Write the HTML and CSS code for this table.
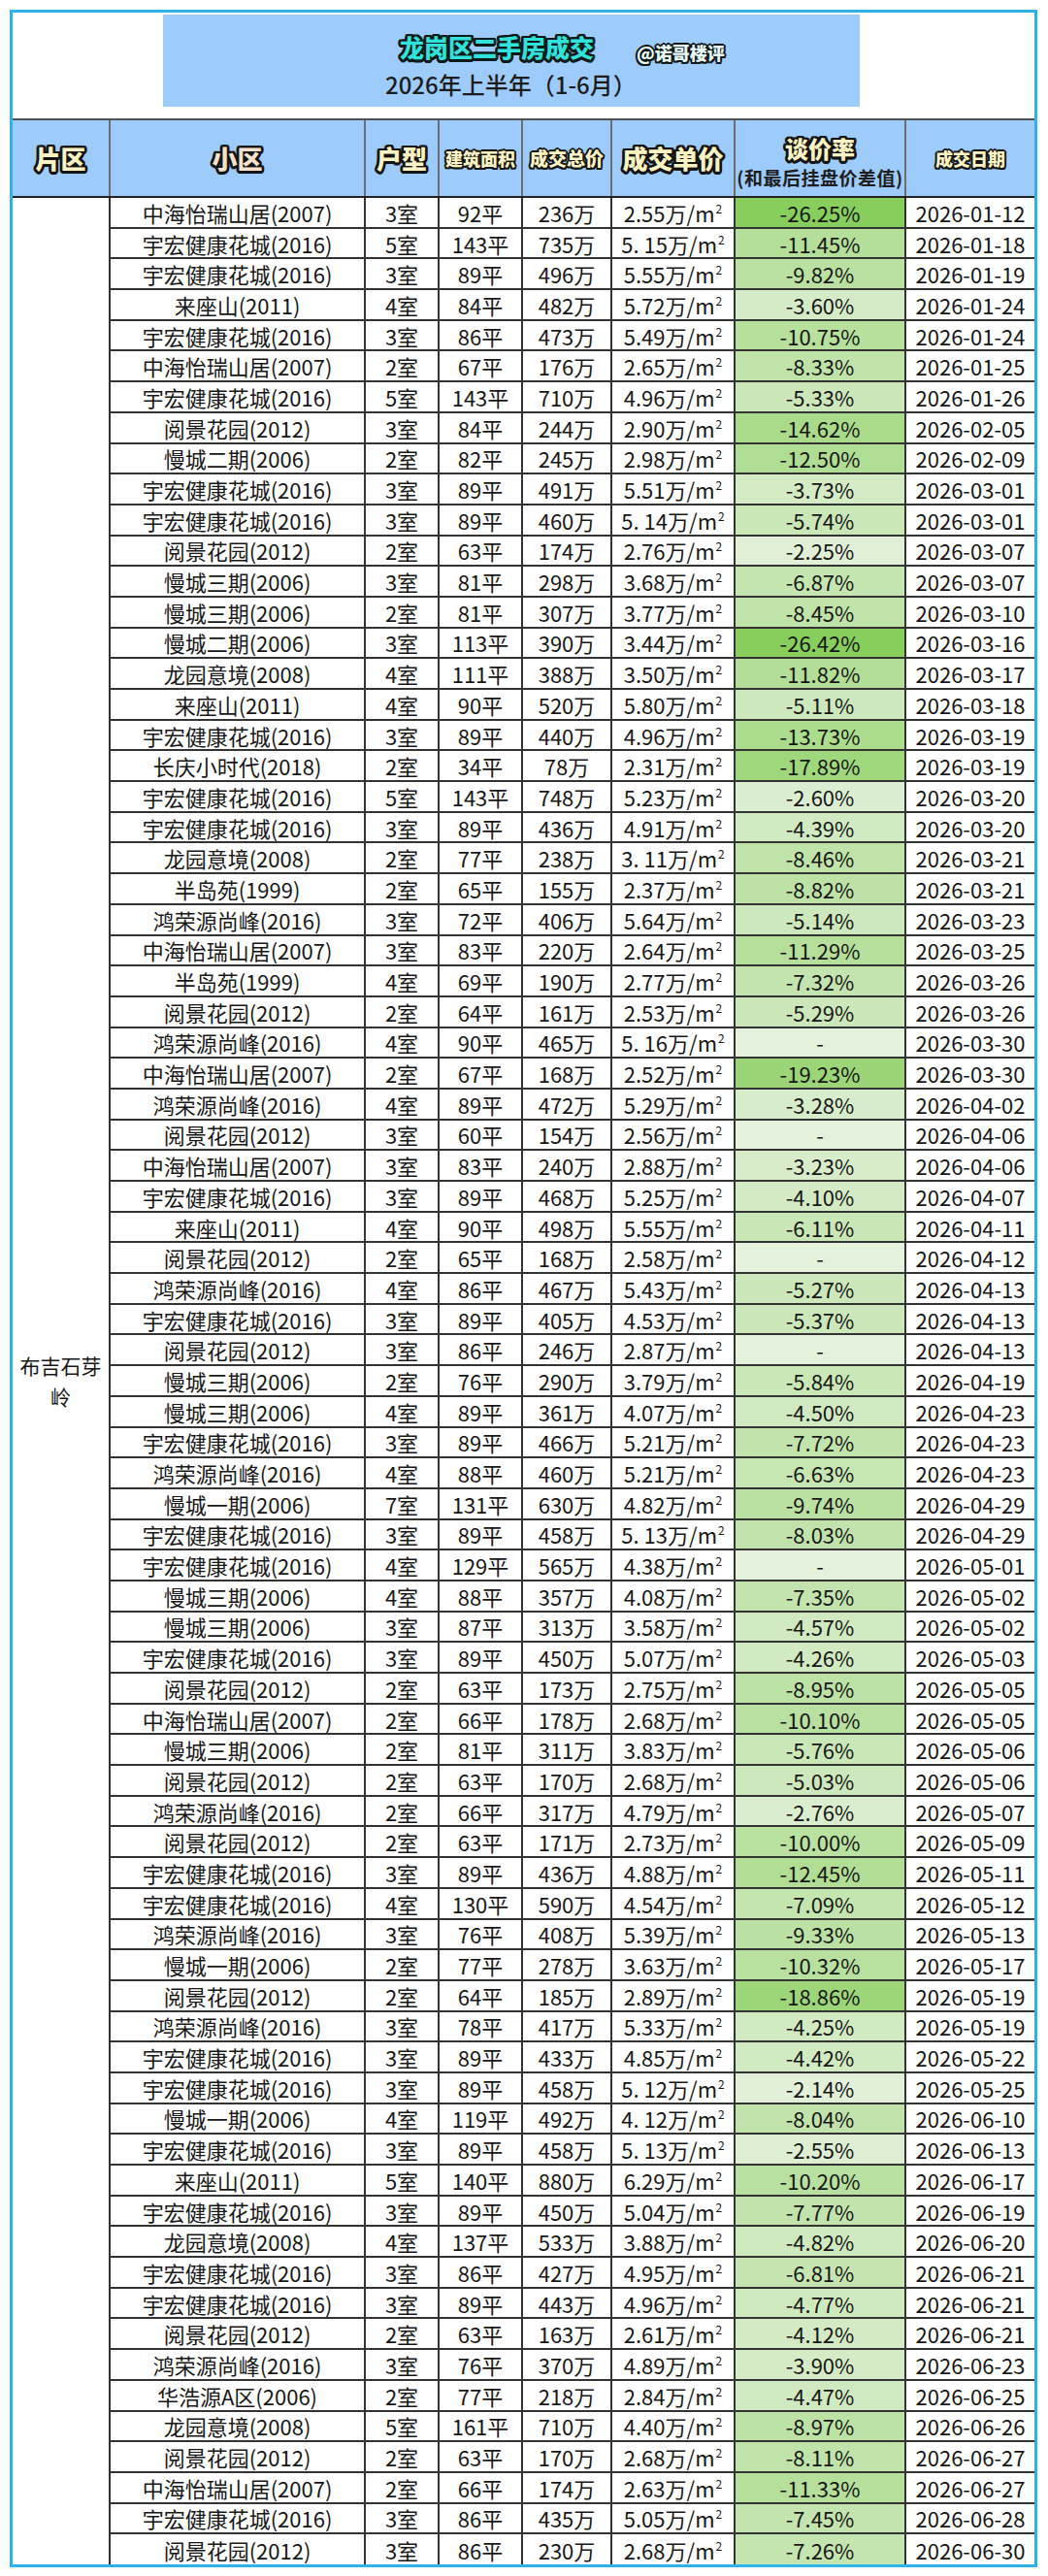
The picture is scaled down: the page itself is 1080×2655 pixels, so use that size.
FILE: index.html
```html
<!DOCTYPE html>
<html lang="zh-CN">
<head>
<meta charset="utf-8">
<title>龙岗区二手房成交 2026年上半年</title>
<link rel="stylesheet" href="styles.css">
</head>
<body>
<div class="frame">
  <div class="title-area">
    <div class="title-box">
      <div class="title-line"><span class="title">龙岗区二手房成交</span><span class="tag">@诺哥楼评</span></div>
      <div class="subtitle">2026年上半年（1-6月）</div>
    </div>
  </div>
  <table class="deals">
    <colgroup>
      <col class="c-area"><col class="c-name"><col class="c-room"><col class="c-size"><col class="c-total"><col class="c-unit"><col class="c-rate"><col class="c-date">
    </colgroup>
    <thead>
      <tr>
        <th><span class="hd hd-lg">片区</span></th>
        <th><span class="hd hd-lg pink">小区</span></th>
        <th><span class="hd hd-lg">户型</span></th>
        <th><span class="hd hd-sm">建筑面积</span></th>
        <th><span class="hd hd-md">成交总价</span></th>
        <th><span class="hd hd-lg">成交单价</span></th>
        <th class="th-rate"><span class="hd hd-rate">谈价率</span><span class="hd-note">(和最后挂盘价差值)</span></th>
        <th><span class="hd hd-sm">成交日期</span></th>
      </tr>
    </thead>
    <tbody>
      <tr><td class="area" rowspan="77">布吉石芽岭</td><td>中海怡瑞山居(2007)</td><td>3室</td><td>92平</td><td>236万</td><td>2.55万/m<sup>2</sup></td><td class="rate" style="background:#88ce5d">-26.25%</td><td>2026-01-12</td></tr>
      <tr><td>宇宏健康花城(2016)</td><td>5室</td><td>143平</td><td>735万</td><td>5. 15万/m<sup>2</sup></td><td class="rate" style="background:#b4df99">-11.45%</td><td>2026-01-18</td></tr>
      <tr><td>宇宏健康花城(2016)</td><td>3室</td><td>89平</td><td>496万</td><td>5.55万/m<sup>2</sup></td><td class="rate" style="background:#bae1a1">-9.82%</td><td>2026-01-19</td></tr>
      <tr><td>来座山(2011)</td><td>4室</td><td>84平</td><td>482万</td><td>5.72万/m<sup>2</sup></td><td class="rate" style="background:#d5ebc8">-3.60%</td><td>2026-01-24</td></tr>
      <tr><td>宇宏健康花城(2016)</td><td>3室</td><td>86平</td><td>473万</td><td>5.49万/m<sup>2</sup></td><td class="rate" style="background:#b6e09c">-10.75%</td><td>2026-01-24</td></tr>
      <tr><td>中海怡瑞山居(2007)</td><td>2室</td><td>67平</td><td>176万</td><td>2.65万/m<sup>2</sup></td><td class="rate" style="background:#bfe3a9">-8.33%</td><td>2026-01-25</td></tr>
      <tr><td>宇宏健康花城(2016)</td><td>5室</td><td>143平</td><td>710万</td><td>4.96万/m<sup>2</sup></td><td class="rate" style="background:#cce8bb">-5.33%</td><td>2026-01-26</td></tr>
      <tr><td>阅景花园(2012)</td><td>3室</td><td>84平</td><td>244万</td><td>2.90万/m<sup>2</sup></td><td class="rate" style="background:#aadb8b">-14.62%</td><td>2026-02-05</td></tr>
      <tr><td>慢城二期(2006)</td><td>2室</td><td>82平</td><td>245万</td><td>2.98万/m<sup>2</sup></td><td class="rate" style="background:#b0dd94">-12.50%</td><td>2026-02-09</td></tr>
      <tr><td>宇宏健康花城(2016)</td><td>3室</td><td>89平</td><td>491万</td><td>5.51万/m<sup>2</sup></td><td class="rate" style="background:#d5ebc6">-3.73%</td><td>2026-03-01</td></tr>
      <tr><td>宇宏健康花城(2016)</td><td>3室</td><td>89平</td><td>460万</td><td>5. 14万/m<sup>2</sup></td><td class="rate" style="background:#cae7b8">-5.74%</td><td>2026-03-01</td></tr>
      <tr><td>阅景花园(2012)</td><td>2室</td><td>63平</td><td>174万</td><td>2.76万/m<sup>2</sup></td><td class="rate" style="background:#e0efd6">-2.25%</td><td>2026-03-07</td></tr>
      <tr><td>慢城三期(2006)</td><td>3室</td><td>81平</td><td>298万</td><td>3.68万/m<sup>2</sup></td><td class="rate" style="background:#c5e5b1">-6.87%</td><td>2026-03-07</td></tr>
      <tr><td>慢城三期(2006)</td><td>2室</td><td>81平</td><td>307万</td><td>3.77万/m<sup>2</sup></td><td class="rate" style="background:#bfe3a8">-8.45%</td><td>2026-03-10</td></tr>
      <tr><td>慢城二期(2006)</td><td>3室</td><td>113平</td><td>390万</td><td>3.44万/m<sup>2</sup></td><td class="rate" style="background:#88ce5c">-26.42%</td><td>2026-03-16</td></tr>
      <tr><td>龙园意境(2008)</td><td>4室</td><td>111平</td><td>388万</td><td>3.50万/m<sup>2</sup></td><td class="rate" style="background:#b3de97">-11.82%</td><td>2026-03-17</td></tr>
      <tr><td>来座山(2011)</td><td>4室</td><td>90平</td><td>520万</td><td>5.80万/m<sup>2</sup></td><td class="rate" style="background:#cde8bc">-5.11%</td><td>2026-03-18</td></tr>
      <tr><td>宇宏健康花城(2016)</td><td>3室</td><td>89平</td><td>440万</td><td>4.96万/m<sup>2</sup></td><td class="rate" style="background:#acdc8e">-13.73%</td><td>2026-03-19</td></tr>
      <tr><td>长庆小时代(2018)</td><td>2室</td><td>34平</td><td>78万</td><td>2.31万/m<sup>2</sup></td><td class="rate" style="background:#9fd77d">-17.89%</td><td>2026-03-19</td></tr>
      <tr><td>宇宏健康花城(2016)</td><td>5室</td><td>143平</td><td>748万</td><td>5.23万/m<sup>2</sup></td><td class="rate" style="background:#dceed1">-2.60%</td><td>2026-03-20</td></tr>
      <tr><td>宇宏健康花城(2016)</td><td>3室</td><td>89平</td><td>436万</td><td>4.91万/m<sup>2</sup></td><td class="rate" style="background:#d1eac1">-4.39%</td><td>2026-03-20</td></tr>
      <tr><td>龙园意境(2008)</td><td>2室</td><td>77平</td><td>238万</td><td>3. 11万/m<sup>2</sup></td><td class="rate" style="background:#bfe3a8">-8.46%</td><td>2026-03-21</td></tr>
      <tr><td>半岛苑(1999)</td><td>2室</td><td>65平</td><td>155万</td><td>2.37万/m<sup>2</sup></td><td class="rate" style="background:#bee2a6">-8.82%</td><td>2026-03-21</td></tr>
      <tr><td>鸿荣源尚峰(2016)</td><td>3室</td><td>72平</td><td>406万</td><td>5.64万/m<sup>2</sup></td><td class="rate" style="background:#cde8bc">-5.14%</td><td>2026-03-23</td></tr>
      <tr><td>中海怡瑞山居(2007)</td><td>3室</td><td>83平</td><td>220万</td><td>2.64万/m<sup>2</sup></td><td class="rate" style="background:#b5df9a">-11.29%</td><td>2026-03-25</td></tr>
      <tr><td>半岛苑(1999)</td><td>4室</td><td>69平</td><td>190万</td><td>2.77万/m<sup>2</sup></td><td class="rate" style="background:#c3e4af">-7.32%</td><td>2026-03-26</td></tr>
      <tr><td>阅景花园(2012)</td><td>2室</td><td>64平</td><td>161万</td><td>2.53万/m<sup>2</sup></td><td class="rate" style="background:#cce8bb">-5.29%</td><td>2026-03-26</td></tr>
      <tr><td>鸿荣源尚峰(2016)</td><td>4室</td><td>90平</td><td>465万</td><td>5. 16万/m<sup>2</sup></td><td class="rate nil">-</td><td>2026-03-30</td></tr>
      <tr><td>中海怡瑞山居(2007)</td><td>2室</td><td>67平</td><td>168万</td><td>2.52万/m<sup>2</sup></td><td class="rate" style="background:#9cd577">-19.23%</td><td>2026-03-30</td></tr>
      <tr><td>鸿荣源尚峰(2016)</td><td>4室</td><td>89平</td><td>472万</td><td>5.29万/m<sup>2</sup></td><td class="rate" style="background:#d7ecca">-3.28%</td><td>2026-04-02</td></tr>
      <tr><td>阅景花园(2012)</td><td>3室</td><td>60平</td><td>154万</td><td>2.56万/m<sup>2</sup></td><td class="rate nil">-</td><td>2026-04-06</td></tr>
      <tr><td>中海怡瑞山居(2007)</td><td>3室</td><td>83平</td><td>240万</td><td>2.88万/m<sup>2</sup></td><td class="rate" style="background:#d8ecca">-3.23%</td><td>2026-04-06</td></tr>
      <tr><td>宇宏健康花城(2016)</td><td>3室</td><td>89平</td><td>468万</td><td>5.25万/m<sup>2</sup></td><td class="rate" style="background:#d3eac4">-4.10%</td><td>2026-04-07</td></tr>
      <tr><td>来座山(2011)</td><td>4室</td><td>90平</td><td>498万</td><td>5.55万/m<sup>2</sup></td><td class="rate" style="background:#c9e6b6">-6.11%</td><td>2026-04-11</td></tr>
      <tr><td>阅景花园(2012)</td><td>2室</td><td>65平</td><td>168万</td><td>2.58万/m<sup>2</sup></td><td class="rate nil">-</td><td>2026-04-12</td></tr>
      <tr><td>鸿荣源尚峰(2016)</td><td>4室</td><td>86平</td><td>467万</td><td>5.43万/m<sup>2</sup></td><td class="rate" style="background:#cce8bb">-5.27%</td><td>2026-04-13</td></tr>
      <tr><td>宇宏健康花城(2016)</td><td>3室</td><td>89平</td><td>405万</td><td>4.53万/m<sup>2</sup></td><td class="rate" style="background:#cce8bb">-5.37%</td><td>2026-04-13</td></tr>
      <tr><td>阅景花园(2012)</td><td>3室</td><td>86平</td><td>246万</td><td>2.87万/m<sup>2</sup></td><td class="rate nil">-</td><td>2026-04-13</td></tr>
      <tr><td>慢城三期(2006)</td><td>2室</td><td>76平</td><td>290万</td><td>3.79万/m<sup>2</sup></td><td class="rate" style="background:#cae7b7">-5.84%</td><td>2026-04-19</td></tr>
      <tr><td>慢城三期(2006)</td><td>4室</td><td>89平</td><td>361万</td><td>4.07万/m<sup>2</sup></td><td class="rate" style="background:#d0e9c1">-4.50%</td><td>2026-04-23</td></tr>
      <tr><td>宇宏健康花城(2016)</td><td>3室</td><td>89平</td><td>466万</td><td>5.21万/m<sup>2</sup></td><td class="rate" style="background:#c2e4ac">-7.72%</td><td>2026-04-23</td></tr>
      <tr><td>鸿荣源尚峰(2016)</td><td>4室</td><td>88平</td><td>460万</td><td>5.21万/m<sup>2</sup></td><td class="rate" style="background:#c6e6b3">-6.63%</td><td>2026-04-23</td></tr>
      <tr><td>慢城一期(2006)</td><td>7室</td><td>131平</td><td>630万</td><td>4.82万/m<sup>2</sup></td><td class="rate" style="background:#bae1a2">-9.74%</td><td>2026-04-29</td></tr>
      <tr><td>宇宏健康花城(2016)</td><td>3室</td><td>89平</td><td>458万</td><td>5. 13万/m<sup>2</sup></td><td class="rate" style="background:#c1e3ab">-8.03%</td><td>2026-04-29</td></tr>
      <tr><td>宇宏健康花城(2016)</td><td>4室</td><td>129平</td><td>565万</td><td>4.38万/m<sup>2</sup></td><td class="rate nil">-</td><td>2026-05-01</td></tr>
      <tr><td>慢城三期(2006)</td><td>4室</td><td>88平</td><td>357万</td><td>4.08万/m<sup>2</sup></td><td class="rate" style="background:#c3e4af">-7.35%</td><td>2026-05-02</td></tr>
      <tr><td>慢城三期(2006)</td><td>3室</td><td>87平</td><td>313万</td><td>3.58万/m<sup>2</sup></td><td class="rate" style="background:#d0e9c0">-4.57%</td><td>2026-05-02</td></tr>
      <tr><td>宇宏健康花城(2016)</td><td>3室</td><td>89平</td><td>450万</td><td>5.07万/m<sup>2</sup></td><td class="rate" style="background:#d2eac2">-4.26%</td><td>2026-05-03</td></tr>
      <tr><td>阅景花园(2012)</td><td>2室</td><td>63平</td><td>173万</td><td>2.75万/m<sup>2</sup></td><td class="rate" style="background:#bde2a6">-8.95%</td><td>2026-05-05</td></tr>
      <tr><td>中海怡瑞山居(2007)</td><td>2室</td><td>66平</td><td>178万</td><td>2.68万/m<sup>2</sup></td><td class="rate" style="background:#b9e0a0">-10.10%</td><td>2026-05-05</td></tr>
      <tr><td>慢城三期(2006)</td><td>2室</td><td>81平</td><td>311万</td><td>3.83万/m<sup>2</sup></td><td class="rate" style="background:#cae7b8">-5.76%</td><td>2026-05-06</td></tr>
      <tr><td>阅景花园(2012)</td><td>2室</td><td>63平</td><td>170万</td><td>2.68万/m<sup>2</sup></td><td class="rate" style="background:#cee8bd">-5.03%</td><td>2026-05-06</td></tr>
      <tr><td>鸿荣源尚峰(2016)</td><td>2室</td><td>66平</td><td>317万</td><td>4.79万/m<sup>2</sup></td><td class="rate" style="background:#dbedcf">-2.76%</td><td>2026-05-07</td></tr>
      <tr><td>阅景花园(2012)</td><td>2室</td><td>63平</td><td>171万</td><td>2.73万/m<sup>2</sup></td><td class="rate" style="background:#b9e1a0">-10.00%</td><td>2026-05-09</td></tr>
      <tr><td>宇宏健康花城(2016)</td><td>3室</td><td>89平</td><td>436万</td><td>4.88万/m<sup>2</sup></td><td class="rate" style="background:#b1dd94">-12.45%</td><td>2026-05-11</td></tr>
      <tr><td>宇宏健康花城(2016)</td><td>4室</td><td>130平</td><td>590万</td><td>4.54万/m<sup>2</sup></td><td class="rate" style="background:#c4e5b0">-7.09%</td><td>2026-05-12</td></tr>
      <tr><td>鸿荣源尚峰(2016)</td><td>3室</td><td>76平</td><td>408万</td><td>5.39万/m<sup>2</sup></td><td class="rate" style="background:#bce1a4">-9.33%</td><td>2026-05-13</td></tr>
      <tr><td>慢城一期(2006)</td><td>2室</td><td>77平</td><td>278万</td><td>3.63万/m<sup>2</sup></td><td class="rate" style="background:#b8e09f">-10.32%</td><td>2026-05-17</td></tr>
      <tr><td>阅景花园(2012)</td><td>2室</td><td>64平</td><td>185万</td><td>2.89万/m<sup>2</sup></td><td class="rate" style="background:#9dd679">-18.86%</td><td>2026-05-19</td></tr>
      <tr><td>鸿荣源尚峰(2016)</td><td>3室</td><td>78平</td><td>417万</td><td>5.33万/m<sup>2</sup></td><td class="rate" style="background:#d2eac2">-4.25%</td><td>2026-05-19</td></tr>
      <tr><td>宇宏健康花城(2016)</td><td>3室</td><td>89平</td><td>433万</td><td>4.85万/m<sup>2</sup></td><td class="rate" style="background:#d1eac1">-4.42%</td><td>2026-05-22</td></tr>
      <tr><td>宇宏健康花城(2016)</td><td>3室</td><td>89平</td><td>458万</td><td>5. 12万/m<sup>2</sup></td><td class="rate" style="background:#e2f0d9">-2.14%</td><td>2026-05-25</td></tr>
      <tr><td>慢城一期(2006)</td><td>4室</td><td>119平</td><td>492万</td><td>4. 12万/m<sup>2</sup></td><td class="rate" style="background:#c1e3ab">-8.04%</td><td>2026-06-10</td></tr>
      <tr><td>宇宏健康花城(2016)</td><td>3室</td><td>89平</td><td>458万</td><td>5. 13万/m<sup>2</sup></td><td class="rate" style="background:#ddeed2">-2.55%</td><td>2026-06-13</td></tr>
      <tr><td>来座山(2011)</td><td>5室</td><td>140平</td><td>880万</td><td>6.29万/m<sup>2</sup></td><td class="rate" style="background:#b8e0a0">-10.20%</td><td>2026-06-17</td></tr>
      <tr><td>宇宏健康花城(2016)</td><td>3室</td><td>89平</td><td>450万</td><td>5.04万/m<sup>2</sup></td><td class="rate" style="background:#c2e4ac">-7.77%</td><td>2026-06-19</td></tr>
      <tr><td>龙园意境(2008)</td><td>4室</td><td>137平</td><td>533万</td><td>3.88万/m<sup>2</sup></td><td class="rate" style="background:#cfe9be">-4.82%</td><td>2026-06-20</td></tr>
      <tr><td>宇宏健康花城(2016)</td><td>3室</td><td>86平</td><td>427万</td><td>4.95万/m<sup>2</sup></td><td class="rate" style="background:#c6e5b2">-6.81%</td><td>2026-06-21</td></tr>
      <tr><td>宇宏健康花城(2016)</td><td>3室</td><td>89平</td><td>443万</td><td>4.96万/m<sup>2</sup></td><td class="rate" style="background:#cfe9be">-4.77%</td><td>2026-06-21</td></tr>
      <tr><td>阅景花园(2012)</td><td>2室</td><td>63平</td><td>163万</td><td>2.61万/m<sup>2</sup></td><td class="rate" style="background:#d3eac4">-4.12%</td><td>2026-06-21</td></tr>
      <tr><td>鸿荣源尚峰(2016)</td><td>3室</td><td>76平</td><td>370万</td><td>4.89万/m<sup>2</sup></td><td class="rate" style="background:#d4ebc5">-3.90%</td><td>2026-06-23</td></tr>
      <tr><td>华浩源A区(2006)</td><td>2室</td><td>77平</td><td>218万</td><td>2.84万/m<sup>2</sup></td><td class="rate" style="background:#d1e9c1">-4.47%</td><td>2026-06-25</td></tr>
      <tr><td>龙园意境(2008)</td><td>5室</td><td>161平</td><td>710万</td><td>4.40万/m<sup>2</sup></td><td class="rate" style="background:#bde2a6">-8.97%</td><td>2026-06-26</td></tr>
      <tr><td>阅景花园(2012)</td><td>2室</td><td>63平</td><td>170万</td><td>2.68万/m<sup>2</sup></td><td class="rate" style="background:#c0e3aa">-8.11%</td><td>2026-06-27</td></tr>
      <tr><td>中海怡瑞山居(2007)</td><td>2室</td><td>66平</td><td>174万</td><td>2.63万/m<sup>2</sup></td><td class="rate" style="background:#b5df9a">-11.33%</td><td>2026-06-27</td></tr>
      <tr><td>宇宏健康花城(2016)</td><td>3室</td><td>86平</td><td>435万</td><td>5.05万/m<sup>2</sup></td><td class="rate" style="background:#c3e4ae">-7.45%</td><td>2026-06-28</td></tr>
      <tr><td>阅景花园(2012)</td><td>3室</td><td>86平</td><td>230万</td><td>2.68万/m<sup>2</sup></td><td class="rate" style="background:#c4e5af">-7.26%</td><td>2026-06-30</td></tr>
    </tbody>
  </table>
</div>
</body>
</html>
```
FILE: styles.css
```css
* { box-sizing: border-box; }

body {
  margin: 0;
  background: #ffffff;
  font-family: "Noto Sans CJK SC", "Noto Sans", sans-serif;
  color: #171717;
}

.frame {
  width: 1059px;
  margin: 10px 0 0 10px;
  border: 3px solid #2fb3e6;
  background: #ffffff;
}

/* ---------- title ---------- */
.title-area {
  height: 109px;
  padding: 2px 0 0 155px;
}

.title-box {
  width: 718px;
  height: 95px;
  background: #9dcbfb;
  padding-top: 17px;
}

.title-line {
  display: flex;
  align-items: center;
  height: 32px;
  padding-left: 244px;
}

.title {
  font-size: 25px;
  font-weight: 900;
  line-height: 32px;
  color: #31e2da;
  text-shadow:
    -2px -2px 0 #0d1a1a, 0 -2.5px 0 #0d1a1a, 2px -2px 0 #0d1a1a, 2.5px 0 0 #0d1a1a,
    2px 2px 0 #0d1a1a, 0 2.5px 0 #0d1a1a, -2px 2px 0 #0d1a1a, -2.5px 0 0 #0d1a1a,
    -1px -2.5px 0 #0d1a1a, 1px -2.5px 0 #0d1a1a, -1px 2.5px 0 #0d1a1a, 1px 2.5px 0 #0d1a1a,
    -2.5px -1px 0 #0d1a1a, 2.5px -1px 0 #0d1a1a, -2.5px 1px 0 #0d1a1a, 2.5px 1px 0 #0d1a1a;
}

.tag {
  margin: 12px 0 0 44px;
  font-size: 18px;
  font-weight: 900;
  line-height: 24px;
  color: #e9fbf9;
  text-shadow:
    -1.5px -1.5px 0 #101818, 0 -2px 0 #101818, 1.5px -1.5px 0 #101818, 2px 0 0 #101818,
    1.5px 1.5px 0 #101818, 0 2px 0 #101818, -1.5px 1.5px 0 #101818, -2px 0 0 #101818;
}

.subtitle {
  margin-top: 8px;
  padding-left: 229px;
  font-size: 24px;
  line-height: 30px;
  font-weight: 500;
  color: #1c1c1c;
}

/* ---------- table ---------- */
.deals {
  width: 1053px;
  border-collapse: collapse;
  table-layout: fixed;
}

.c-area { width: 100px; }
.c-name { width: 263px; }
.c-room { width: 76px; }
.c-size { width: 86px; }
.c-total { width: 92px; }
.c-unit { width: 127px; }
.c-rate { width: 176px; }
.c-date { width: 133px; }

.deals th {
  height: 80px;
  padding: 0;
  background: #9dcbfb;
  border-top: 2px solid #4f5356;
  border-bottom: 2px solid #222222;
  border-left: 2px solid #6b6f72;
  text-align: center;
  vertical-align: middle;
}

.deals th:first-child { border-left: none; }

.hd {
  display: inline-block;
  font-weight: 900;
  color: #fcf3c2;
  text-shadow:
    -2px -2px 0 #141414, 0 -2.5px 0 #141414, 2px -2px 0 #141414, 2.5px 0 0 #141414,
    2px 2px 0 #141414, 0 2.5px 0 #141414, -2px 2px 0 #141414, -2.5px 0 0 #141414,
    -1px -2.5px 0 #141414, 1px -2.5px 0 #141414, -1px 2.5px 0 #141414, 1px 2.5px 0 #141414,
    -2.5px -1px 0 #141414, 2.5px -1px 0 #141414, -2.5px 1px 0 #141414, 2.5px 1px 0 #141414;
}

.hd-lg { font-size: 26px; line-height: 32px; }
.hd-md { font-size: 19px; line-height: 26px; }
.hd-sm { font-size: 18px; line-height: 26px; }
.hd-rate { font-size: 24px; line-height: 30px; margin-top: 6px; }
.pink { color: #f6e1cc; }

.hd-md, .hd-sm {
  text-shadow:
    -1.5px -1.5px 0 #141414, 0 -2px 0 #141414, 1.5px -1.5px 0 #141414, 2px 0 0 #141414,
    1.5px 1.5px 0 #141414, 0 2px 0 #141414, -1.5px 1.5px 0 #141414, -2px 0 0 #141414;
}

.th-rate .hd,
.hd-note { display: block; }

.hd-note {
  margin-top: 3px;
  font-size: 19px;
  line-height: 24px;
  font-weight: 700;
  color: #1e1e1e;
  letter-spacing: 0.5px;
}

.deals td {
  height: 31.7px;
  padding: 0;
  border: 2px solid #333333;
  text-align: center;
  vertical-align: middle;
  font-size: 22px;
  line-height: 26px;
  white-space: nowrap;
  color: #171717;
  background: #ffffff;
}

.deals td:last-child { border-right: none; }
.deals tbody tr:last-child td { border-bottom: none; }

.deals td.area {
  border-left: none;
  border-bottom: none;
  white-space: normal;
  font-size: 21px;
  line-height: 32px;
  padding: 0 1px;
}

.deals td.nil { background: #e4f1dc; }

.deals sup {
  font-size: 12px;
  line-height: 0;
  vertical-align: 9px;
  margin-left: 1px;
}
```
